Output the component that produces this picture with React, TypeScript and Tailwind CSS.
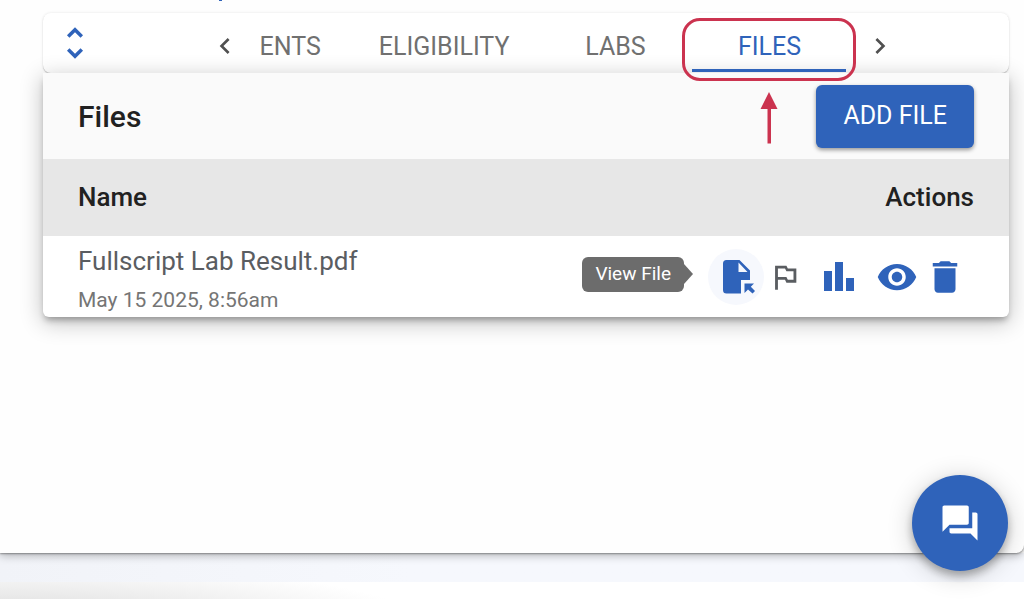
import type { ReactNode } from "react";
import {
  MdChevronLeft,
  MdChevronRight,
  MdDelete,
  MdOutlinedFlag,
  MdQuestionAnswer,
  MdUnfoldMore,
  MdVisibility,
} from "react-icons/md";

const files = [{ name: "Fullscript Lab Result.pdf", date: "May 15 2025, 8:56am" }];

function Tab({ label, active, children }: { label: string; active?: boolean; children?: ReactNode }) {
  return (
    <div className="relative flex">
      <button
        role="tab"
        aria-selected={!!active}
        className={
          active
            ? "min-w-[154px] px-[29px] pt-2 text-[25px] leading-8 text-[#2f63ba]"
            : "min-w-[154px] px-[29px] pt-2 text-[25px] leading-8 text-[#707070]"
        }
      >
        {label}
      </button>
      {active && <span className="absolute inset-x-0 bottom-px z-10 h-[3px] bg-[#2f63ba]" />}
      {children}
    </div>
  );
}

function OpenFileIcon() {
  return (
    <svg width="38" height="34" viewBox="-6 0 38 34" fill="currentColor" aria-hidden="true">
      <path
        fillRule="evenodd"
        d="M3.500 0H16.500L27 10.500V20H18V33.500H3.500A3.500 3.500 0 0 1 0 30V3.500A3.500 3.500 0 0 1 3.500 0ZM15.500 2.500V12H24.500Z"
      />
      <path d="M21.500 23.500H31L27.800 26.700L32 31L29.500 33.500L25 29.500L21.500 33Z" />
    </svg>
  );
}

function BarsIcon() {
  return (
    <svg width="42" height="42" viewBox="0 0 42 42" fill="currentColor" aria-hidden="true">
      <rect x="6" y="15" width="8" height="20" />
      <rect x="17" y="6" width="8" height="29" />
      <rect x="28" y="22" width="8" height="13" />
    </svg>
  );
}

function FileActions() {
  return (
    <div className="flex items-center justify-end gap-4 text-[#2f63ba]">
      <div className="flex items-center gap-1">
        <div className="relative flex">
          <span
            role="tooltip"
            className="absolute top-2 right-full mr-6 flex h-[35px] items-center rounded-md bg-[#6c6c6c] px-[13px] text-[19px] whitespace-nowrap text-white"
          >
            View File
            <svg className="absolute left-full" width="9" height="20" viewBox="0 0 9 20" aria-hidden="true">
              <path d="M0 0L9 10L0 20Z" fill="#6c6c6c" />
            </svg>
          </span>
          <button aria-label="View File" className="flex size-14 items-center justify-center rounded-full bg-[#f6f8fd]">
            <OpenFileIcon />
          </button>
        </div>
        <button aria-label="Flag" className="text-[#5a5d61]">
          <MdOutlinedFlag size={34} />
        </button>
      </div>
      <button aria-label="Results">
        <BarsIcon />
      </button>
      <div className="flex items-center gap-1.5">
        <button aria-label="Show">
          <MdVisibility size={42} />
        </button>
        <button aria-label="Delete">
          <MdDelete size={42} />
        </button>
      </div>
    </div>
  );
}

export default function App() {
  return (
    <div className="flex min-h-screen flex-col bg-white font-['Roboto',sans-serif]">
      <main className="relative z-10 flex-1 rounded-br-lg bg-[#fefefe] pr-[15px] pl-[43px] shadow-[0_1px_2px_rgba(0,0,0,0.35),0_3px_8px_rgba(0,0,0,0.25)]">
        <div className="h-[13px] pl-[176px]">
          <div className="h-px w-[3px] bg-[#2f63ba]" />
        </div>

        <div className="flex h-[60px] rounded-lg bg-white shadow-[0_0_3px_rgba(0,0,0,0.1),0_1px_1px_rgba(0,0,0,0.2)]">
          <button aria-label="Expand" className="flex w-16 items-center justify-center text-[#2f63ba]">
            <MdUnfoldMore size={42} />
          </button>
          <div className="flex flex-1 justify-center">
            <button aria-label="Previous tabs" className="flex w-[46px] items-center justify-center pt-1.5 text-[#505050]">
              <MdChevronLeft size={32} />
            </button>
            <div role="tablist" className="flex">
              <button role="tab" aria-selected={false} className="pt-2 pr-[29px] pl-3 text-[25px] leading-8 text-[#707070]">
                ENTS
              </button>
              <Tab label="ELIGIBILITY" />
              <Tab label="LABS" />
              <Tab label="FILES" active>
                {/* callout ring and arrow */}
                <span className="pointer-events-none absolute -inset-x-2.5 top-[5px] -bottom-2 z-10 rounded-[18px] border-3 border-[#cb334f]" />
                <svg
                  className="pointer-events-none absolute top-[79px] left-1/2 z-10 -translate-x-1/2"
                  width="18"
                  height="52"
                  viewBox="0 0 18 52"
                  fill="#cb334f"
                  aria-hidden="true"
                >
                  <path d="M9 0L17.500 17H11V51.500H7.500V17H0.500Z" />
                </svg>
              </Tab>
            </div>
            <button aria-label="Next tabs" className="flex w-[68px] items-center justify-center pt-1.5 text-[#505050]">
              <MdChevronRight size={32} />
            </button>
          </div>
        </div>

        <section className="relative rounded-b-md bg-white shadow-[0_5px_6px_-2px_rgba(0,0,0,0.3),0_5px_22px_1px_rgba(0,0,0,0.24)]">
          <div className="flex h-[86px] items-center justify-between bg-[#fafafa] px-[35px]">
            <h2 className="text-[30px] font-medium text-[#212121]">Files</h2>
            <button className="h-[63px] rounded-md bg-[#2f63ba] px-[27px] text-[25px] text-white shadow-[0_2px_4px_rgba(0,0,0,0.4)]">
              ADD FILE
            </button>
          </div>
          <table className="w-full">
            <thead>
              <tr className="h-[77px] bg-[#e7e7e7] text-[26px] text-[#212121]">
                <th className="pl-[35px] text-left font-medium">Name</th>
                <th className="pr-[35px] text-right font-medium">Actions</th>
              </tr>
            </thead>
            <tbody>
              {files.map((file) => (
                <tr key={file.name}>
                  <td className="pt-[9px] pb-[3px] pl-[35px]">
                    <div className="text-[26px] leading-8 text-[#5a5d61]">{file.name}</div>
                    <div className="mt-[9px] text-[21px] leading-7 text-[#757575]">{file.date}</div>
                  </td>
                  <td className="pr-[43px]">
                    <FileActions />
                  </td>
                </tr>
              ))}
            </tbody>
          </table>
        </section>
      </main>

      <div className="h-[29px] bg-linear-to-r from-[#f1f3f8] to-[#f6f8fd] to-40%" />
      <div className="h-[17px] bg-[radial-gradient(ellipse_420px_60px_at_0_40px,#e4e4e4_30%,#ffffff)]" />

      <button
        aria-label="Open chat"
        className="fixed right-4 bottom-7 z-20 flex size-24 items-center justify-center rounded-full bg-[#2f63ba] text-white shadow-[0_5px_8px_rgba(0,0,0,0.28),0_4px_26px_rgba(0,0,0,0.2)]"
      >
        <MdQuestionAnswer size={42} />
      </button>
    </div>
  );
}
